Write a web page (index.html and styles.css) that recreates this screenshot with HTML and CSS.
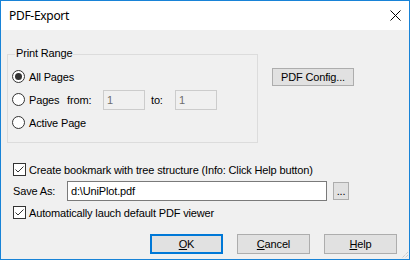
FILE: index.html
```html
<!DOCTYPE html>
<html>
<head>
<meta charset="utf-8">
<title>PDF-Export</title>
<link rel="stylesheet" href="styles.css">
</head>
<body>
<div class="window">
  <div class="titlebar">
    <span class="title">PDF-Export</span>
    <svg class="close" width="11" height="11" viewBox="0 0 11 11"><path d="M0.5 0.5L10.5 10.5M10.5 0.5L0.5 10.5" stroke="#000" stroke-width="1" fill="none"/></svg>
  </div>
  <div class="client">
    <div class="top">
      <div class="group">
        <span class="legend">Print Range</span>
        <div class="row"><span class="radio checked"></span><span>All Pages</span></div>
        <div class="row"><span class="radio"></span><span class="lbl-pages">Pages</span><span class="lbl-from">from:</span><span class="input disabled">1</span><span class="lbl-to">to:</span><span class="input disabled">1</span></div>
        <div class="row"><span class="radio"></span><span>Active Page</span></div>
      </div>
      <button class="btn config">PDF Config...</button>
    </div>
    <div class="check-row first"><span class="check"><svg width="11" height="11" viewBox="0 0 11 11"><path d="M1.5 5.5L4 8L9.5 2.5" stroke="#333" stroke-width="1" fill="none"/></svg></span><span>Create bookmark with tree structure (Info: Click Help button)</span></div>
    <div class="save-row"><span class="lbl-save">Save As:</span><span class="input path">d:\UniPlot.pdf</span><button class="btn browse">...</button></div>
    <div class="check-row"><span class="check"><svg width="11" height="11" viewBox="0 0 11 11"><path d="M1.5 5.5L4 8L9.5 2.5" stroke="#333" stroke-width="1" fill="none"/></svg></span><span>Automatically lauch default PDF viewer</span></div>
    <div class="buttons">
      <button class="btn dlg default"><u>O</u>K</button>
      <button class="btn dlg"><u>C</u>ancel</button>
      <button class="btn dlg"><u>H</u>elp</button>
    </div>
    <svg class="grip" width="8" height="8" viewBox="0 0 8 8">
      <path d="M7 1L1 7M7 4L4 7M7 7L7 7" stroke="#b8b8b8" stroke-width="1" stroke-dasharray="1 1" fill="none"/>
    </svg>
  </div>
</div>
</body>
</html>
```
FILE: styles.css
```css
* { box-sizing: border-box; }
html, body { margin: 0; padding: 0; background: #fff; }
body {
  font-family: "Liberation Sans", Arial, sans-serif;
  font-size: 11px;
  letter-spacing: -0.15px;
  color: #000;
}
.window {
  width: 410px;
  height: 260px;
  border: 1px solid #1883d7;
  display: flex;
  flex-direction: column;
  position: relative;
  background: #f0f0f0;
}
.titlebar {
  height: 29px;
  flex: none;
  background: #fff;
  display: flex;
  align-items: center;
  padding: 0 8px 0 8px;
}
.title {
  flex: 1;
  font-family: "Noto Sans", "Open Sans", sans-serif;
  font-size: 12px;
  letter-spacing: -0.3px;
}
.close { display: block; }
.client {
  flex: 1;
  position: relative;
  padding-left: 6px;
  display: flex;
  flex-direction: column;
}
.top {
  display: flex;
  align-items: flex-start;
  margin-top: 24px;
}
.group {
  position: relative;
  width: 251px;
  height: 89px;
  border: 1px solid #dcdcdc;
  padding: 10px 0 0 4px;
}
.legend {
  position: absolute;
  left: 7px;
  top: -8px;
  padding: 0 1px;
  line-height: 13px;
  background: #f0f0f0;
}
.row {
  height: 23px;
  display: flex;
  align-items: center;
}
.radio {
  width: 13px;
  height: 13px;
  flex: none;
  border: 1px solid #333;
  border-radius: 50%;
  background: #fff;
  margin-right: 4px;
  display: flex;
  align-items: center;
  justify-content: center;
}
.radio.checked::after {
  content: "";
  width: 7px;
  height: 7px;
  border-radius: 50%;
  background: #333;
}
.lbl-pages { width: 38px; }
.lbl-from { width: 36px; }
.lbl-to { width: 24px; margin-left: 6px; }
.input {
  height: 20px;
  border: 1px solid #7a7a7a;
  background: #fff;
  padding-left: 3px;
  display: flex;
  align-items: center;
}
.input.disabled {
  width: 42px;
  border-color: #cccccc;
  background: #f0f0f0;
  color: #6d6d6d;
}
.btn {
  font: inherit;
  letter-spacing: inherit;
  color: #000;
  padding: 0;
  border: 1px solid #adadad;
  background: #e1e1e1;
}
.config {
  width: 82px;
  height: 18px;
  margin: 14px 0 0 14px;
}
.check-row {
  display: flex;
  align-items: center;
  height: 13px;
  margin: 5px 0 0 6px;
}
.check-row.first { margin-top: 20px; }
.check {
  width: 13px;
  height: 13px;
  flex: none;
  border: 1px solid #333;
  background: #fff;
  margin-right: 3px;
}
.check svg { display: block; }
.save-row {
  display: flex;
  align-items: center;
  height: 20px;
  margin: 5px 0 0 6px;
}
.lbl-save { width: 54px; }
.input.path { width: 260px; }
.browse {
  width: 16px;
  height: 18px;
  margin-left: 6px;
  line-height: 10px;
}
.buttons {
  display: flex;
  gap: 14px;
  margin: 15px 0 0 143px;
}
.dlg {
  width: 73px;
  height: 20px;
}
.dlg.default { border: 2px solid #0078d7; }
.grip {
  position: absolute;
  right: 0;
  bottom: 0;
}
```
